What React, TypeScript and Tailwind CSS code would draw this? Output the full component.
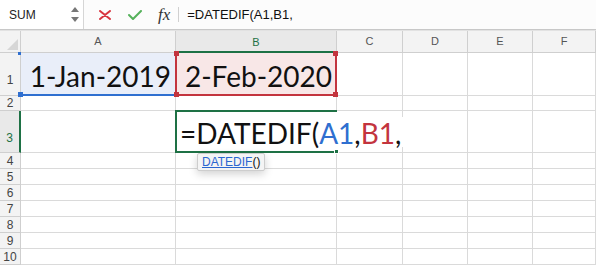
import React from "react";

const cols = ["A", "B", "C", "D", "E", "F"];
const rowHeights = [43, 15, 42, 16, 16, 16, 16, 16, 16, 16];

const bigText = "text-[28px] leading-none text-[#111] [font-family:Lato,sans-serif]";

// small square handle at a corner of a highlighted range
const Handle = ({ pos, color }: { pos: string; color: string }) => (
  <span className={`absolute h-[5px] w-[5px] ${pos} ${color}`} />
);

const FormulaBar = () => {
  return (
    <div className="flex h-[30px] items-stretch border-b border-[#c8c8c8] bg-[#fcfcfc]">
      {/* name box */}
      <div className="flex w-[84px] items-center justify-between border-r border-[#d6d6d6] bg-white pl-[9px] pr-[4px]">
        <span className="text-[12px] text-[#222]">SUM</span>
        <div className="flex flex-col gap-[5px]">
          <svg width="8" height="5" viewBox="0 0 8 5">
            <path d="M4 0 L8 5 L0 5 Z" fill="#777" />
          </svg>
          <svg width="8" height="5" viewBox="0 0 8 5">
            <path d="M0 0 L8 0 L4 5 Z" fill="#777" />
          </svg>
        </div>
      </div>
      {/* cancel / enter / fx */}
      <div className="flex items-center pl-[15px]">
        <svg width="12" height="10" viewBox="0 0 12 10">
          <path d="M1 1 L11 9 M11 1 L1 9" stroke="#d8343e" strokeWidth="2" strokeLinecap="round" />
        </svg>
        <svg className="ml-[17px]" width="14" height="10" viewBox="0 0 14 10">
          <path d="M1 5 L5 9 L13 1" stroke="#55b15b" strokeWidth="2" fill="none" strokeLinecap="round" strokeLinejoin="round" />
        </svg>
        <span className="ml-[16px] text-[17px] italic text-[#333] [font-family:'Liberation_Serif',serif]">
          fx
        </span>
        <div className="ml-[8px] h-[15px] w-px bg-[#d0d0d0]" />
        <span className="ml-[8px] text-[13px] text-[#111]">=DATEDIF(A1,B1,</span>
      </div>
    </div>
  );
};

const Cell = ({ c, r }: { c: string; r: number }) => {
  if (r === 1 && c === "A") {
    return (
      <div className="relative flex items-end justify-end border-r border-b-2 border-r-[#dadada] border-b-[#2f6fd0] bg-[#e9eef9] pr-[4px] pb-[4px]">
        <span className={bigText}>1-Jan-2019</span>
        <Handle pos="-left-[3px] -top-[1px] h-[3px]! w-[3px]!" color="bg-[#2f6fd0]" />
        <Handle pos="-left-[3px] -bottom-[3px]" color="bg-[#2f6fd0]" />
      </div>
    );
  }
  if (r === 1 && c === "B") {
    return (
      <div className="relative -ml-px flex items-end justify-end border-x-2 border-b-2 border-[#c3343e] bg-[#f8e7e7] pr-[3px] pb-[4px]">
        <span className={bigText}>2-Feb-2020</span>
        <Handle pos="-left-[3px] -top-[2px]" color="bg-[#c3343e]" />
        <Handle pos="-right-[3px] -top-[2px]" color="bg-[#c3343e]" />
        <Handle pos="-left-[3px] -bottom-[3px]" color="bg-[#c3343e]" />
        <Handle pos="-right-[3px] -bottom-[3px]" color="bg-[#c3343e]" />
      </div>
    );
  }
  if (r === 3 && c === "B") {
    // active cell in edit mode: text runs on over C3
    return (
      <div className="relative -ml-px -mt-px flex items-center border-y-2 border-l-2 border-[#1e7145]">
        <span className={`relative z-10 -mr-[70px] whitespace-nowrap bg-white pt-[2px] pr-[3px] pl-[3px] ${bigText}`}>
          =DATEDIF(<span className="text-[#2f6fd0]">A1</span>,<span className="text-[#c3343e]">B1</span>,
        </span>
        <Handle pos="-right-[2px] -bottom-[3px] border border-white" color="bg-[#1e7145]" />
        {/* function tooltip */}
        <div className="absolute left-[20px] top-full z-20 mt-[2px] flex h-[18px] items-center rounded-[2px] border border-[#cdcdcd] bg-[#f4f4f4] px-[4px] text-[12px] shadow-[0_3px_8px_rgba(0,0,0,0.18)]">
          <span className="text-[#2a66d0] underline">DATEDIF</span>
          <span className="text-[#111]">()</span>
        </div>
      </div>
    );
  }
  return <div className="border-r border-b border-[#dadada]" />;
};

const App = () => {
  return (
    <div className="relative h-[265px] w-[596px] overflow-hidden bg-white [font-family:'Liberation_Sans',Arial,sans-serif]">
      <FormulaBar />

      <div className="grid grid-cols-[21px_155px_161px_66px_65px_65px_63px] grid-rows-[22px_43px_15px_42px_16px_16px_16px_16px_16px_16px_16px] border-t border-[#e2e2e2]">
        {/* select-all corner */}
        <div className="flex items-end justify-end border-r border-b border-[#cfcfcf] bg-[#f3f3f3] p-[2px]">
          <svg width="11" height="11" viewBox="0 0 11 11">
            <path d="M11 0 L11 11 L0 11 Z" fill="#d6d6d6" />
          </svg>
        </div>
        {cols.map((c) => (
          <div
            key={c}
            className={
              c === "B"
                ? "flex items-center justify-center border-r border-b-2 border-r-[#cfcfcf] border-b-[#1e7145] bg-[#e9e9e9] pt-[2px] text-[11px] text-[#1e7145]"
                : "flex items-center justify-center border-r border-b border-[#cfcfcf] bg-[#f3f3f3] text-[11px] text-[#555]"
            }
          >
            {c}
          </div>
        ))}

        {rowHeights.map((_, i) => {
          const r = i + 1;
          return (
            <React.Fragment key={r}>
              <div
                className={
                  r === 3
                    ? "flex items-end justify-center border-r-2 border-b border-r-[#1e7145] border-b-[#cfcfcf] bg-[#e9e9e9] pb-[5px] text-[12px] text-[#1e7145]"
                    : r === 1
                      ? "flex items-end justify-center border-r border-b border-[#cfcfcf] bg-[#f3f3f3] pb-[6px] text-[12px] text-[#444]"
                      : "flex items-center justify-center border-r border-b border-[#cfcfcf] bg-[#f3f3f3] text-[12px] text-[#444]"
                }
              >
                {r}
              </div>
              {cols.map((c) => (
                <Cell key={c + r} c={c} r={r} />
              ))}
            </React.Fragment>
          );
        })}
      </div>
    </div>
  );
};

export default App;
